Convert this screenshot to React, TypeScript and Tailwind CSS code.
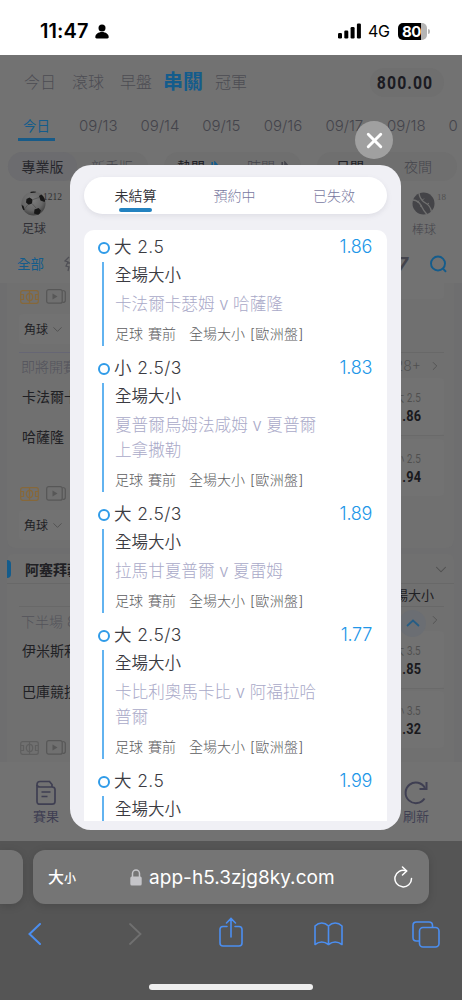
import React from 'react';
import { ChevronDown, ChevronRight, X } from 'lucide-react';

interface Bet {
  pick: string;
  odds: string;
  match?: string[];
}

// the last bet is only partly scrolled into view
const bets: Bet[] = [
  { pick: '大 2.5', odds: '1.86', match: ['卡法爾卡瑟姆 v 哈薩隆'] },
  { pick: '小 2.5/3', odds: '1.83', match: ['夏普爾烏姆法咸姆 v 夏普爾', '上拿撒勒'] },
  { pick: '大 2.5/3', odds: '1.89', match: ['拉馬甘夏普爾 v 夏雷姆'] },
  { pick: '大 2.5/3', odds: '1.77', match: ['卡比利奧馬卡比 v 阿福拉哈', '普爾'] },
  { pick: '大 2.5', odds: '1.99' },
];

const dates = ['09/13', '09/14', '09/15', '09/16', '09/17', '09/18', '0'];

const StatusBar = () => (
  <header className="flex h-[55px] shrink-0 items-center bg-white pt-[7px] pl-[40px] text-black">
    <span className="w-[50px] text-[20px] font-semibold tracking-[0.1px] whitespace-nowrap">11:47</span>
    <svg className="ml-[5px] h-[15px] w-[14px]" viewBox="0 0 14 15">
      <circle cx="7" cy="4" r="3.5" fill="#000" />
      <path d="M0.3 13C0.3 10.300 3.300 8 7 8C10.700 8 13.700 10.300 13.700 13C13.700 14 13.200 14.400 12.400 14.400H1.600C0.800 14.400 0.300 14 0.300 13Z" fill="#000" />
    </svg>
    <svg className="ml-[229px] h-[16px] w-[23px]" viewBox="0 0 23 16" fill="currentColor">
      <rect x="0" y="10" width="4" height="5.5" rx="1.2" />
      <rect x="6.3" y="7.5" width="4" height="8" rx="1.2" />
      <rect x="12.6" y="4" width="4" height="11.5" rx="1.2" />
      <rect x="18.9" y="0.5" width="4" height="15" rx="1.2" />
    </svg>
    <span className="ml-[7px] w-[23px] text-[16px] tracking-[-0.4px]">4G</span>
    <div className="ml-[7px] flex h-[17px] w-[29px] items-center overflow-hidden rounded-[5px] bg-[linear-gradient(90deg,#000_80%,#b5b5b5_80%)]">
      <span className="w-full pr-[2px] text-center text-[15px] leading-none font-bold tracking-[-0.5px] text-white">80</span>
    </div>
    <div className="ml-px h-[5px] w-[2px] rounded-r-full bg-[#b5b5b5]" />
  </header>
);

const SoccerBall = () => (
  <svg className="h-[25px] w-[25px]" viewBox="0 0 25 25">
    <defs>
      <radialGradient id="ball" cx="0.45" cy="0.35" r="0.65">
        <stop offset="0" stopColor="#7c7c7c" />
        <stop offset="0.65" stopColor="#676767" />
        <stop offset="1" stopColor="#424242" />
      </radialGradient>
      <clipPath id="ballClip">
        <circle cx="12.5" cy="12.5" r="12" />
      </clipPath>
    </defs>
    <circle cx="12.5" cy="12.5" r="12" fill="url(#ball)" />
    <g clipPath="url(#ballClip)" fill="#181818">
      <path d="M5.5 8 8.500 6.500l3 2-.5 4-3.500 1.200-2.500-2.200Z" />
      <path d="m18 5 3-2 4 5-1.500 3-4-1.500Z" />
      <path d="M0 13.500 2.500 15l1.200 4L1 19Z" />
      <path d="m13.500 18.500 4-1.500 2.500 2.500L18 24l-5-1.500Z" />
      <path d="m8 0 8-.5-1.500 2L10 2Z" />
    </g>
    <path d="M11 12.500l4 4.500M12 8.500l6-2M7 13.500l-3 4" stroke="#484848" strokeWidth="0.6" fill="none" />
  </svg>
);

const Baseball = () => (
  <svg className="h-[23px] w-[23px]" viewBox="0 0 23 23">
    <circle cx="11.5" cy="11.5" r="11" fill="#444448" />
    <g fill="none" stroke="#707070" strokeWidth="1.4">
      <path d="M7 1C7.500 6.500 10 9 13.500 11S19 16 19.500 20" />
      <path d="M1 8C5.500 8.500 7.500 10.500 9 13.500S12 19.500 15 22.500" />
      <path d="m10 8.500 2-2M15 12.500l2-1.500M5.500 10.500l1.500-2M8 14.500l2-1.500" strokeWidth="1" />
    </g>
  </svg>
);

const MediaIcons = ({ muted }: { muted?: boolean }) => (
  <div className="flex items-center gap-[7px] pl-[13px]">
    <svg
      className={muted ? 'h-[14px] w-[19px] text-[#5f5f5f]' : 'h-[14px] w-[19px] text-[#86683a]'}
      viewBox="0 0 19 14"
      fill="none"
      stroke="currentColor"
      strokeWidth="1.2"
    >
      <rect x="0.7" y="0.7" width="17.6" height="12.6" rx="2" />
      <path d="M9.500 1v12M1 4.500h2.500v5H1M18 4.500h-2.500v5H18" />
      <ellipse cx="9.5" cy="7" rx="3.2" ry="3.6" />
    </svg>
    <svg className="h-[15px] w-[21px] text-[#575757]" viewBox="0 0 21 15" fill="none" stroke="currentColor" strokeWidth="1.2">
      <rect x="0.7" y="0.7" width="15.5" height="13.5" rx="2" />
      <path d="M16.500 1.500c2 0 2.800.5 2.800 2v8c0 1.500-.8 2-2.800 2" />
      <path d="m6.500 4.500 5 3-5 3Z" fill="currentColor" stroke="none" />
    </svg>
  </div>
);

const CornerChip = () => (
  <div className="flex h-[30px] w-[60px] items-center gap-[2px] rounded bg-[#727272] pt-px pl-[5px] text-[12px] text-[#202024]">
    角球
    <ChevronDown className="h-[15px] w-[15px] shrink-0 text-[#505050]" strokeWidth={1.5} />
  </div>
);

const OddsBox = ({ line, odds }: { line: string; odds: string }) => (
  <div className="flex h-[57px] w-[104px] flex-col items-end justify-center rounded-[4px] bg-[#727272] pr-[23px]">
    <span className="origin-right scale-x-[0.82] text-[11.5px] leading-[18px] text-[#505050]">{line}</span>
    <span className="origin-right scale-x-[0.85] font-['Roboto'] text-[15px] leading-[18px] font-bold tracking-[0.3px] text-[#19191d]">
      {odds}
    </span>
  </div>
);

const SortArrows = () => (
  <svg className="ml-[4px] h-[10px] w-[9px]" viewBox="0 0 9 10" fill="none" stroke="currentColor" strokeWidth="1.6">
    <path d="M3.200 1v8L0.500 6M6 9V1.500l2.500 3" />
  </svg>
);

const SportsPage = () => (
  <main className="flex h-[786px] shrink-0 flex-col overflow-hidden bg-[#727272] text-[#44444b]">
    <nav className="flex h-[54px] shrink-0 items-center pr-[18px] pl-[24px] text-[16px] font-light text-[#4c4c52]">
      <span className="w-[48px]">今日</span>
      <span className="w-[48px]">滾球</span>
      <span className="w-[43px]">早盤</span>
      <span className="w-[52px] text-[20px] font-bold text-[#145c8c]">串關</span>
      <span>冠軍</span>
      <span className="ml-auto flex h-[29px] w-[74px] items-center justify-center rounded-full bg-[#6f6f6f] pr-[3px] text-[#1b1b22]">
        <span className="scale-x-[0.88] font-['Roboto'] text-[18px] font-bold tracking-[1.2px]">800.00</span>
      </span>
    </nav>

    <div className="flex h-[36px] shrink-0 items-center pb-[3px] pl-[18px]">
      <div className="flex w-[61px] shrink-0 flex-col">
        <div className="flex h-[30px] w-[37px] items-end justify-center border-b-[3px] border-[#185b88] pb-[4px] text-[13.5px] leading-[16px] text-[#145c8c]">
          今日
        </div>
      </div>
      {dates.map((d) => (
        <span key={d} className="w-[61.6px] shrink-0 pt-px text-[15px] font-light last:w-[10px]">{d}</span>
      ))}
    </div>

    <div className="flex h-[40px] shrink-0 items-center gap-[16px] pt-[2px] pl-[8px] text-[14px]">
      <div className="flex h-[29px] w-[140px] shrink-0 items-center rounded-full bg-[#6f6f6f]">
        <span className="flex h-full w-[69px] items-center justify-center rounded-full bg-[#6c6c6f] text-[#27272c]">專業版</span>
        <span className="pl-[14px] font-light">新手版</span>
      </div>
      <div className="flex h-[29px] w-[137px] shrink-0 items-center rounded-full bg-[#6f6f6f] pl-[13px]">
        <span className="text-[#202026]">熱門</span>
        <span className="text-[#145c8c]"><SortArrows /></span>
        <span className="ml-[29px] font-light">時間</span>
        <SortArrows />
      </div>
      <div className="flex h-[29px] w-[140px] shrink-0 items-center rounded-full bg-[#6f6f6f] pl-[19px]">
        <span className="text-[#202026]">日間</span>
        <span className="ml-[40px] font-light">夜間</span>
      </div>
    </div>

    <div className="flex h-[60px] shrink-0 justify-between pt-[6px] pr-[16px] pl-[21px]">
      <div className="flex flex-col">
        <div className="flex items-start">
          <SoccerBall />
          <span className="-ml-[3px] font-['Liberation_Serif'] text-[9.5px] leading-[13px] text-[#303030]">1212</span>
        </div>
        <span className="pt-[4px] pl-[1px] text-[12px] leading-[18px] text-[#303036]">足球</span>
      </div>
      <div className="flex flex-col">
        <div className="flex items-start pt-[1px]">
          <Baseball />
          <span className="ml-[2px] font-['Liberation_Serif'] text-[9px] leading-[11px] text-[#505050]">18</span>
        </div>
        <span className="pt-[6px] text-[12px] leading-[18px] font-light">棒球</span>
      </div>
    </div>

    <div className="flex h-[38px] shrink-0 items-center pr-[15px] pl-[17px] text-[14px]">
      <span className="text-[13.5px] text-[#145c8c]">全部</span>
      <svg className="ml-[20px] h-[16px] w-[16px]" viewBox="0 0 16 16" fill="none" stroke="#505056" strokeWidth="1.3">
        <path d="M5 1 1 5l3 1-2 4 3 1-1 4M3 7h4" />
      </svg>
      <span className="ml-auto text-[19px] leading-none font-bold text-[#44444c] italic">7</span>
      <svg className="ml-[22px] h-[18px] w-[17px]" viewBox="0 0 17 18" fill="none" stroke="#145c8c" strokeWidth="1.9">
        <circle cx="8" cy="8.5" r="7" />
        <path d="m12.500 13 3.500 3.800" />
      </svg>
    </div>

    <div className="flex flex-1 flex-col bg-[#6e6e6f] pr-[8px] pl-[7px]">
      {/* first league card */}
      <section className="flex h-[265px] shrink-0 justify-between rounded-b-[8px] bg-[#707070] pr-[10px] text-[14px] text-[#202024]">
        <div className="flex w-[140px] flex-col">
          <div className="h-[29px] pt-[6px]"><MediaIcons /></div>
          <div className="h-[40px] pt-[2px] pl-[12px]"><CornerChip /></div>
          <div className="ml-[12px] flex h-[28px] items-center border-t border-[#666674] pl-[2px] font-light text-[#53535c]">即將開賽</div>
          <div className="flex h-[40px] items-center pb-[8px] pl-[15px]">卡法爾卡</div>
          <div className="flex h-[40px] items-center pb-[7px] pl-[15px]">哈薩隆</div>
          <div className="h-[50px] pt-[26px]"><MediaIcons /></div>
          <div className="h-[38px] pl-[12px]"><CornerChip /></div>
        </div>
        <div className="flex flex-col items-end">
          <div className="flex h-[16px] w-[104px] items-start justify-end overflow-hidden rounded-b-[4px] bg-[#727272] pr-[22px]">
            <span className="-mt-[14px] origin-right scale-x-[0.85] font-['Roboto'] text-[15px] leading-[18px] font-bold text-[#19191d]">1.88</span>
          </div>
          <div className="mt-[53px] flex h-[26px] w-[104px] items-center justify-end gap-[7px] border-t border-[#686868] pr-[2px] text-[14px] font-light text-[#505050]">
            <span>28+</span>
            <ChevronRight className="h-[16px] w-[14px]" strokeWidth={1.5} />
          </div>
          <OddsBox line="大 2.5" odds="1.86" />
          <div className="h-[4px] w-full border-t border-[#6a6a6a]" />
          <OddsBox line="小 2.5" odds="1.94" />
        </div>
      </section>

      {/* second league card */}
      <section className="mt-[6px] flex flex-1 flex-col rounded-t-[6px] bg-[#707070] text-[14px] text-[#202024]">
        <div className="flex h-[30px] shrink-0 items-center border-b border-[#686868] pt-px pr-[4px]">
          <span className="h-[18px] w-[4px] rounded-r-full bg-[#145c8c]" />
          <span className="pl-[14px] font-bold">阿塞拜疆</span>
          <ChevronDown className="ml-auto h-[19px] w-[18px] text-[#505050]" strokeWidth={1.4} />
        </div>
        <div className="flex justify-between pr-[10px]">
          <div className="flex w-[140px] flex-col">
            <div className="ml-[12px] h-[23px] border-b border-[#686868]" />
            <div className="flex h-[28px] items-center pl-[14px] font-light text-[#53535a]">下半場 88</div>
            <div className="flex h-[38px] items-center pb-[8px] pl-[15px]">伊米斯利</div>
            <div className="flex h-[38px] items-center pb-[2px] pl-[15px]">巴庫競技</div>
            <div className="h-[48px] pt-[29px]"><MediaIcons muted /></div>
          </div>
          <div className="flex flex-col items-end">
            <div className="h-[23px] w-[104px] border-b border-[#686868] pr-[10px] text-right text-[13px] leading-[22px]">全場大小</div>
            <div className="flex h-[24px] items-center gap-[2px] pt-[2px] pr-[2px]">
              <span className="flex h-[27px] w-[27px] translate-y-[3px] items-center justify-center rounded-full bg-[#6b6e73]">
                <svg className="h-[8px] w-[14px]" viewBox="0 0 14 8" fill="none" stroke="#265d85" strokeWidth="1.7">
                  <path d="m1 7 6-5.500L13 7" />
                </svg>
              </span>
              <ChevronRight className="h-[16px] w-[14px] text-[#505050]" strokeWidth={1.5} />
            </div>
            <OddsBox line="大 3.5" odds="1.85" />
            <div className="h-[3px] w-full border-t border-[#6a6a6a]" />
            <OddsBox line="小 3.5" odds="1.32" />
          </div>
        </div>
      </section>
    </div>

    <footer className="flex h-[79px] shrink-0 justify-between bg-[#727272] pt-[18px] pr-[33px] pl-[33px] text-[13px] text-[#3f3f52]">
      <div className="flex flex-col items-center">
        <svg className="h-[26px] w-[20px]" viewBox="0 0 20 26" fill="none" stroke="currentColor" strokeWidth="1.7">
          <path d="M1 6V4.500C1 2.500 2 1.500 4 1.500H13.500L16 4.500V7" />
          <path d="M1 5C1.500 6.800 2.500 7 4 7H16c2 0 3 .8 3 2.500v12c0 1.800-1 2.700-3 2.700H4c-2 0-3-.9-3-2.700V5M5.500 12h9M5.500 16.500h6" />
        </svg>
        <span className="leading-[21px]">賽果</span>
      </div>
      <div className="flex flex-col items-center">
        <svg className="h-[26px] w-[26px]" viewBox="0 0 26 26" fill="none" stroke="currentColor" strokeWidth="2">
          <path d="M21.500 18.500A10.300 10.300 0 1 1 22 8" />
          <path d="M23.500 2v7h-7" />
        </svg>
        <span className="leading-[21px]">刷新</span>
      </div>
    </footer>
  </main>
);

const BetItem = ({ bet }: { bet: Bet }) => (
  <li className={bet.match ? 'flex shrink-0 pb-[5px] pl-[14px] text-[#3b3b42]' : 'flex flex-1 pl-[14px] text-[#3b3b42]'}>
    <div className="flex w-[12px] shrink-0 flex-col items-center pt-[10px]">
      <span className="h-[12px] w-[12px] rounded-full border-[2.5px] border-[#2f9be8]" />
      <span className={bet.match ? 'mt-[8px] mr-[2px] mb-[2px] w-0 flex-1 border-l-2 border-[#62b3f0]' : 'mt-[8px] mr-[2px] w-0 flex-1 border-l-2 border-[#62b3f0]'} />
    </div>
    <div className="flex flex-1 flex-col pl-[5px]">
      <div className="-ml-px flex h-[29px] items-center justify-between pr-[15px] font-light whitespace-nowrap">
        <span className="pt-[2px] text-[17.5px] font-[350] tracking-[0.4px]">{bet.pick}</span>
        <span className="text-[18px] tracking-[-0.3px] text-[#2196e8]">{bet.odds}</span>
      </div>
      <span className="h-[29px] text-[16.5px] leading-[29px] font-[350]">全場大小</span>
      {bet.match && (
        <>
          <div className="py-[2px] text-[16.6px] leading-[25px] font-light text-[#a9a9c8]">
            {bet.match.map((line) => (
              <div key={line} className="whitespace-nowrap">{line}</div>
            ))}
          </div>
          <div className="flex h-[29px] items-center text-[14px] font-light whitespace-nowrap text-[#5c5c60]">
            <span className="w-[33px]">足球</span>
            <span className="w-[41px]">賽前</span>
            <span className="w-[61px]">全場大小</span>
            <span className="tracking-[0.4px]">[歐洲盤]</span>
          </div>
        </>
      )}
    </div>
  </li>
);

const BetsModal = () => (
  <div className="absolute top-[165px] left-[70px] flex h-[665px] w-[331px] flex-col rounded-[21px] bg-[#f0f0f5] px-[14px] pt-[12px] pb-[9px]">
    <button className="absolute -top-[44px] left-[285px] flex h-[38px] w-[38px] items-center justify-center rounded-full bg-[#a0a0a0] text-white">
      <X className="h-[25px] w-[25px]" strokeWidth={2.8} />
    </button>
    <div className="grid h-[37px] shrink-0 grid-cols-3 rounded-full bg-white text-[14px] text-[#7878a0] shadow-[0_2px_5px_rgba(120,120,140,0.15)]">
      <div className="flex flex-col items-center pl-[2px] text-[#333338]">
        <span className="h-[31px] leading-[37px] font-[350]">未結算</span>
        <span className="h-[4px] w-[33px] rounded-full bg-[#2382c0]" />
      </div>
      <span className="pr-[2px] text-center leading-[37px] font-light">預約中</span>
      <span className="pr-[5px] text-center leading-[37px] font-light">已失效</span>
    </div>
    <ul className="mt-[16px] flex flex-1 flex-col overflow-hidden rounded-t-[10px] bg-white pt-[1.5px]">
      {bets.map((bet, i) => (
        <BetItem key={i} bet={bet} />
      ))}
    </ul>
  </div>
);

const BrowserBar = () => (
  <footer className="flex h-[159px] shrink-0 flex-col bg-[#555] pt-[9px] text-white">
    <div className="flex h-[54px] shrink-0 gap-[10px]">
      <div className="w-[23px] rounded-r-[12px] bg-[#757575] shadow-[0_2px_8px_rgba(0,0,0,0.15)]" />
      <div className="flex w-[396px] items-center rounded-[12px] bg-[#757575] pr-[16px] pl-[15px] shadow-[0_2px_8px_rgba(0,0,0,0.15)]">
        <span className="flex w-[82px] items-baseline text-[16px] font-medium">
          大<span className="text-[12px]">小</span>
        </span>
        <svg className="h-[17px] w-[12px] text-[#c4c4c8]" viewBox="0 0 12 17" fill="none" stroke="currentColor" strokeWidth="1.5">
          <path d="M2.500 8V4.500a3.500 3.500 0 0 1 7 0V8" />
          <rect x="0.3" y="7.5" width="11.4" height="9" rx="1.5" fill="currentColor" stroke="none" />
        </svg>
        <span className="ml-[7px] pt-[2px] text-[19px] tracking-[0.05px] whitespace-nowrap">app-h5.3zjg8ky.com</span>
        <svg className="ml-auto h-[23px] w-[19px]" viewBox="0 0 19 23" fill="none" stroke="currentColor" strokeWidth="1.5">
          <path d="M17.500 12.500A8.300 8.300 0 1 1 12 4.800" strokeLinecap="round" />
          <path d="m8.500 1 4.200 4-4.200 4" strokeLinecap="round" />
        </svg>
      </div>
    </div>
    <div className="flex h-[60px] shrink-0 items-center pl-[28px] text-[#4b8ef0]">
      <svg className="h-[22px] w-[13px]" viewBox="0 0 13 22" fill="none" stroke="currentColor" strokeWidth="2" strokeLinecap="round">
        <path d="M12 1 1.500 11 12 21" />
      </svg>
      <svg className="ml-[88px] h-[22px] w-[13px] text-[#707070]" viewBox="0 0 13 22" fill="none" stroke="currentColor" strokeWidth="1.8" strokeLinecap="round">
        <path d="m1 1 10.500 10L1 21" />
      </svg>
      <svg className="-mt-[4px] ml-[77px] h-[30px] w-[24px]" viewBox="0 0 24 30" fill="none" stroke="currentColor" strokeWidth="1.6" strokeLinecap="round">
        <path d="M8 9.500H4c-2 0-3 1-3 3V26c0 2 1 3 3 3h16c2 0 3-1 3-3V12.500c0-2-1-3-3-3h-4M12 20V1.500M7.500 6 12 1.500 16.500 6" />
      </svg>
      <svg className="ml-[71px] h-[24px] w-[29px]" viewBox="0 0 29 24" fill="none" stroke="currentColor" strokeWidth="1.6" strokeLinejoin="round">
        <path d="M14.500 4C12.500 2 10.500 1 7.800 1S3 2 1 4v18.500c2-1.500 4-2.500 6.800-2.500s4.700 1 6.700 2.500c2-1.500 4-2.500 6.700-2.500s4.800 1 6.800 2.500V4c-2-2-4-3-6.800-3s-4.700 1-6.700 3Zm0 0v18.500" />
      </svg>
      <svg className="ml-[69px] h-[27px] w-[28px]" viewBox="0 0 28 27" fill="none" stroke="currentColor" strokeWidth="1.6">
        <path d="M7.500 20H4.500C2 20 1 19 1 16.500v-12C1 2 2 1 4.500 1h12.500C19.500 1 20.500 2 20.500 4.500v1.700" />
        <rect x="7.5" y="6.5" width="19.5" height="19.5" rx="3.5" />
      </svg>
    </div>
    <div className="mt-[20px] ml-[149px] h-[6px] w-[164px] rounded-full bg-[#eee]" />
  </footer>
);

const App: React.FC = () => {
  return (
    <div className="relative flex h-[1000px] w-[462px] flex-col overflow-hidden font-['Inter','Noto_Sans_CJK_TC',sans-serif]">
      <StatusBar />
      <SportsPage />
      <BrowserBar />
      <BetsModal />
    </div>
  );
};

export default App;
